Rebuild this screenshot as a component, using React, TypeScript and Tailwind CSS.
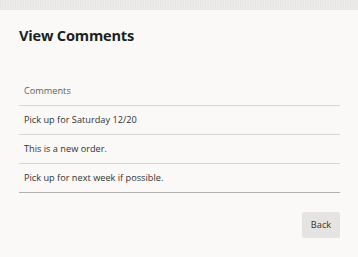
const comments = ['Pick up for Saturday 12/20', 'This is a new order.', 'Pick up for next week if possible.'];

export default function App() {
  return (
    <div
      className="w-[358px] h-[257px] bg-[#faf9f8] flex flex-col overflow-hidden text-[#323130]"
      style={{ fontFamily: '"Open Sans", "Noto Sans", sans-serif' }}
    >
      <div className="h-[10px] bg-[repeating-linear-gradient(90deg,#e4e3e2_0px,#eeedec_2px,#e6e5e4_3px,#f0efee_5px)]" />

      <div className="pl-[19px] pr-[18px] flex flex-col">
        <h2 className="mt-[15px] text-[14.6px] leading-[20px] font-bold tracking-[-0.2px] text-[#201f1e]">
          View Comments
        </h2>

        <div className="mt-[32px]">
          <div className="h-[29px] flex items-center pl-[5px] border-b border-[#d8d6d4] text-[9.2px] text-[#605e5c]">
            Comments
          </div>
          {comments.map((c, i) => (
            <div
              key={c}
              className={
                'h-[29px] flex items-center pl-[5px] border-b text-[9.2px] ' +
                (i === comments.length - 1 ? 'border-[#b3b1af]' : 'border-[#d8d6d4]')
              }
            >
              {c}
            </div>
          ))}
        </div>

        <div className="mt-[19px] flex justify-end">
          <button
            type="button"
            className="w-[38px] h-[26px] rounded-[2px] bg-[#e6e4e2] text-[9.2px] text-[#323130]"
          >
            Back
          </button>
        </div>
      </div>
    </div>
  );
}
